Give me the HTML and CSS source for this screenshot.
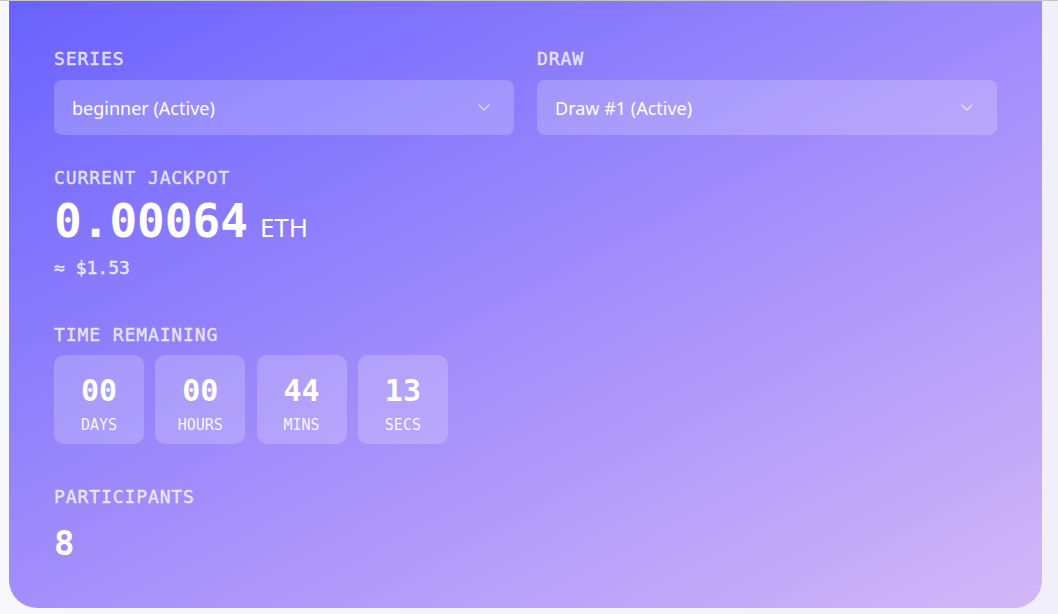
FILE: index.html
```html
<!DOCTYPE html>
<html lang="en">
<head>
<meta charset="utf-8">
<title>Lottery</title>
<link rel="stylesheet" href="styles.css">
</head>
<body>
<div class="topline"></div>
<main class="page">
  <section class="card">
    <div class="selects">
      <div class="field">
        <div class="label">SERIES</div>
        <div class="select">
          <span>beginner (Active)</span>
          <svg class="chev" width="12" height="7" viewBox="0 0 12 7"><path d="M1 1l5 5 5-5" fill="none" stroke="currentColor" stroke-width="1.5" stroke-linecap="round" stroke-linejoin="round"/></svg>
        </div>
      </div>
      <div class="field">
        <div class="label">DRAW</div>
        <div class="select">
          <span>Draw #1 (Active)</span>
          <svg class="chev" width="12" height="7" viewBox="0 0 12 7"><path d="M1 1l5 5 5-5" fill="none" stroke="currentColor" stroke-width="1.5" stroke-linecap="round" stroke-linejoin="round"/></svg>
        </div>
      </div>
    </div>

    <div class="label jackpot-label">CURRENT JACKPOT</div>
    <div class="jackpot"><span class="amount">0.00064</span><span class="unit">ETH</span></div>
    <div class="usd">≈ $1.53</div>

    <div class="label time-label">TIME REMAINING</div>
    <div class="countdown">
      <div class="tbox"><div class="tnum">00</div><div class="tlab">DAYS</div></div>
      <div class="tbox"><div class="tnum">00</div><div class="tlab">HOURS</div></div>
      <div class="tbox"><div class="tnum">44</div><div class="tlab">MINS</div></div>
      <div class="tbox"><div class="tnum">13</div><div class="tlab">SECS</div></div>
    </div>

    <div class="label part-label">PARTICIPANTS</div>
    <div class="participants">8</div>
  </section>
</main>
</body>
</html>
```

FILE: styles.css
```css
* { box-sizing: border-box; }
html, body { margin: 0; padding: 0; }
body {
  background: linear-gradient(90deg, #f8f7fc 0%, #f1f0fa 100%);
  height: 614px;
  overflow: hidden;
  font-family: "Noto Sans", "Open Sans", sans-serif;
}
.topline {
  height: 1px;
  background: #c4c3cc;
}
.page {
  padding: 0 16px 0 9px;
}
.card {
  height: 607px;
  border-radius: 0 0 28px 28px;
  background: linear-gradient(152deg, #6a62ff 0%, #9b88fb 45%, #d2b7f7 100%);
  padding: 48px 45px 48px 45px;
  color: #fff;
}
.selects {
  display: flex;
  gap: 23px;
}
.field { flex: 1; }
.label {
  font-family: "DejaVu Sans Mono", monospace;
  font-size: 18px;
  line-height: 20px;
  letter-spacing: 0.9px;
  color: rgba(255, 255, 255, 0.76);
  font-weight: normal;
  -webkit-text-stroke: 0.4px currentColor;
}
.field .label { margin-bottom: 11px; }
.select {
  height: 55px;
  border-radius: 8px;
  background: rgba(255, 255, 255, 0.2);
  display: flex;
  align-items: center;
  justify-content: space-between;
  padding: 0 24px 0 18px;
  font-size: 18px;
  color: #fff;
}
.chev { color: rgba(255, 255, 255, 0.6); display: block; }
.jackpot-label { margin-top: 33px; }
.jackpot {
  display: flex;
  align-items: baseline;
  height: 46px;
  margin-top: 10px;
}
.amount {
  font-family: "DejaVu Sans Mono", monospace;
  font-weight: 700;
  font-size: 46px;
  line-height: 46px;
}
.unit {
  font-size: 26px;
  margin-left: 12px;
  line-height: 26px;
}
.usd {
  font-family: "DejaVu Sans Mono", monospace;
  font-weight: normal;
  font-size: 18px;
  line-height: 20px;
  margin-top: 13.5px;
  color: rgba(255, 255, 255, 0.8);
  -webkit-text-stroke: 0.4px currentColor;
}
.time-label { margin-top: 47px; }
.countdown {
  display: flex;
  gap: 11.3px;
  margin-top: 10.6px;
}
.tbox {
  width: 90px;
  height: 89px;
  border-radius: 10px;
  background: rgba(255, 255, 255, 0.2);
  display: flex;
  flex-direction: column;
  align-items: center;
  padding-top: 20.5px;
}
.tnum {
  font-family: "DejaVu Sans Mono", monospace;
  font-weight: 700;
  font-size: 30px;
  line-height: 30px;
}
.tlab {
  font-family: "DejaVu Sans Mono", monospace;
  font-size: 15px;
  line-height: 15px;
  margin-top: 12px;
  color: rgba(255, 255, 255, 0.92);
}
.part-label { margin-top: 43px; }
.participants {
  font-family: "DejaVu Sans Mono", monospace;
  font-weight: 700;
  font-size: 34px;
  line-height: 34px;
  margin-top: 19px;
}
```
